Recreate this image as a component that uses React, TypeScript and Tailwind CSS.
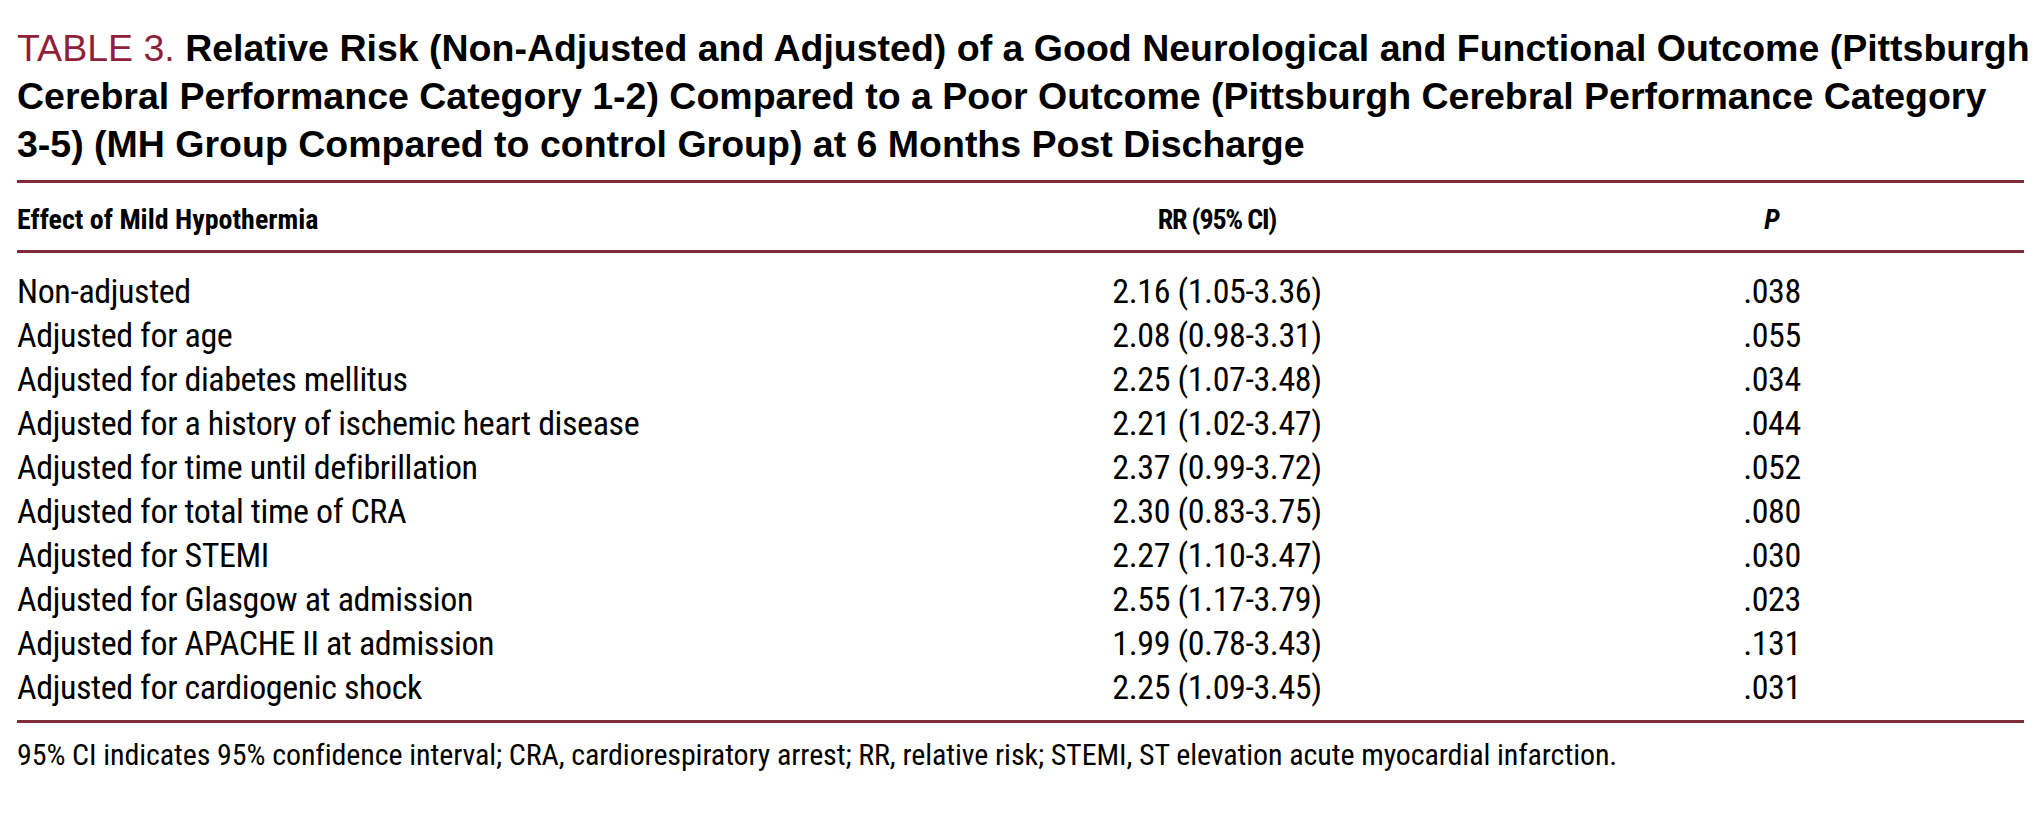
const rows: [string, string, string][] = [
  ["Non-adjusted", "2.16 (1.05-3.36)", ".038"],
  ["Adjusted for age", "2.08 (0.98-3.31)", ".055"],
  ["Adjusted for diabetes mellitus", "2.25 (1.07-3.48)", ".034"],
  ["Adjusted for a history of ischemic heart disease", "2.21 (1.02-3.47)", ".044"],
  ["Adjusted for time until defibrillation", "2.37 (0.99-3.72)", ".052"],
  ["Adjusted for total time of CRA", "2.30 (0.83-3.75)", ".080"],
  ["Adjusted for STEMI", "2.27 (1.10-3.47)", ".030"],
  ["Adjusted for Glasgow at admission", "2.55 (1.17-3.79)", ".023"],
  ["Adjusted for APACHE II at admission", "1.99 (0.78-3.43)", ".131"],
  ["Adjusted for cardiogenic shock", "2.25 (1.09-3.45)", ".031"],
];

export default function App() {
  return (
    <div className="w-[2041px] h-[820px] bg-white px-[17px] pt-[24px] text-black">
      <h1 className="font-['Liberation_Sans',Arial,sans-serif] text-[37.5px] leading-[48px] font-bold whitespace-nowrap">
        <span className="font-normal text-[#8f1f3b]">TABLE 3.</span> Relative Risk (Non-Adjusted and Adjusted) of a Good Neurological and Functional Outcome (Pittsburgh
        <br />
        Cerebral Performance Category 1-2) Compared to a Poor Outcome (Pittsburgh Cerebral Performance Category
        <br />
        3-5) (MH Group Compared to control Group) at 6 Months Post Discharge
      </h1>

      <div className="mt-[12px] font-['Roboto_Condensed','Liberation_Sans_Narrow',sans-serif]">
        <div className="grid grid-cols-[897px_606px_504px] border-y-[3px] border-[#7f2b3a] pt-[23px] pb-[16px] text-[28px] leading-[28px] font-bold">
          <div className="whitespace-nowrap">Effect of Mild Hypothermia</div>
          <div className="text-center tracking-[-1.2px] whitespace-nowrap">RR (95% CI)</div>
          <div className="text-center italic">P</div>
        </div>

        <div className="border-b-[3px] border-[#7f2b3a] pt-[16px] pb-[11px] text-[34px] leading-[44px] tracking-[-0.4px]">
          {rows.map(([label, rr, p]) => (
            <div key={label} className="grid grid-cols-[897px_606px_504px]">
              <div className="whitespace-nowrap">{label}</div>
              <div className="text-center whitespace-nowrap">{rr}</div>
              <div className="text-center">{p}</div>
            </div>
          ))}
        </div>

        <p className="pt-[12px] text-[30px] leading-[40px] tracking-[-0.1px] whitespace-nowrap">
          95% CI indicates 95% confidence interval; CRA, cardiorespiratory arrest; RR, relative risk; STEMI, ST elevation acute myocardial infarction.
        </p>
      </div>
    </div>
  );
}
